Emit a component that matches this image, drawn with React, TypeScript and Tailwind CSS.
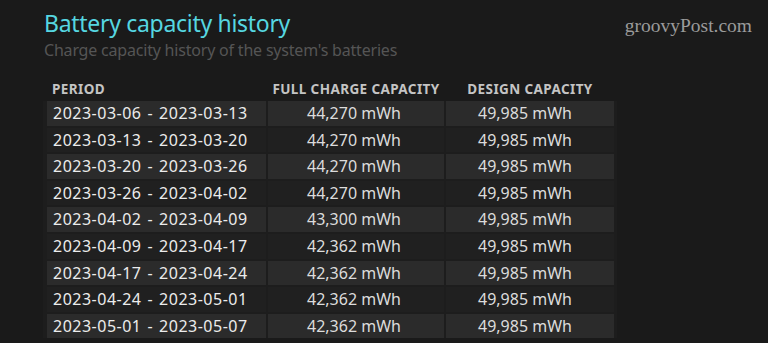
import React from 'react';

interface CapacityRow {
  period: string;
  full: string;
  design: string;
}

const rows: CapacityRow[] = [
  { period: '2023-03-06 - 2023-03-13', full: '44,270 mWh', design: '49,985 mWh' },
  { period: '2023-03-13 - 2023-03-20', full: '44,270 mWh', design: '49,985 mWh' },
  { period: '2023-03-20 - 2023-03-26', full: '44,270 mWh', design: '49,985 mWh' },
  { period: '2023-03-26 - 2023-04-02', full: '44,270 mWh', design: '49,985 mWh' },
  { period: '2023-04-02 - 2023-04-09', full: '43,300 mWh', design: '49,985 mWh' },
  { period: '2023-04-09 - 2023-04-17', full: '42,362 mWh', design: '49,985 mWh' },
  { period: '2023-04-17 - 2023-04-24', full: '42,362 mWh', design: '49,985 mWh' },
  { period: '2023-04-24 - 2023-05-01', full: '42,362 mWh', design: '49,985 mWh' },
  { period: '2023-05-01 - 2023-05-07', full: '42,362 mWh', design: '49,985 mWh' },
];

const App: React.FC = () => {
  return (
    <div className="relative h-[343px] w-[768px] overflow-hidden bg-[#1a1a1a] font-['Noto_Sans',sans-serif]">
      <div className="absolute right-[16px] top-[11px] font-['Liberation_Serif',serif] text-[19.5px] text-[#9b9b9b]">
        groovyPost.com
      </div>

      <div className="pl-[44px] pt-[6px]">
        <h1 className="text-[23px] leading-[34px] tracking-[-0.3px] text-[#56d7e1]">Battery capacity history</h1>
        <p className="text-[16px] leading-[20px] tracking-[-0.2px] text-[#555555]">Charge capacity history of the system's batteries</p>
      </div>

      <div className="ml-[43px] mt-[21px] w-[574px]">
        <div className="grid grid-cols-[219px_176px_168px] gap-x-[2px] px-[4px] pb-[4px] text-[13.5px] font-bold leading-[16px] tracking-[0.4px] text-[#c4c4c4]">
          <div className="pl-[5px]">PERIOD</div>
          <div className="text-center">FULL CHARGE CAPACITY</div>
          <div className="text-center">DESIGN CAPACITY</div>
        </div>
        <div className="grid grid-cols-[219px_176px_168px] gap-x-[2px] gap-y-[2px] bg-[#1d1d1d] px-[4px]">
          {rows.map((r, i) => {
            const bg = i % 2 === 0 ? 'bg-[#2b2b2b]' : 'bg-[#202020]';
            return (
              <React.Fragment key={r.period}>
                <div className={`${bg} h-[24.6px] pl-[6px] text-[16px] leading-[24px] tracking-[0.5px] [word-spacing:1.3px] text-[#ececec]`}>{r.period}</div>
                <div className={`${bg} h-[24.6px] pr-[4px] text-center text-[16px] leading-[24px] text-[#dcdcdc]`}>{r.full}</div>
                <div className={`${bg} h-[24.6px] pr-[10px] text-center text-[16px] leading-[24px] text-[#dcdcdc]`}>{r.design}</div>
              </React.Fragment>
            );
          })}
        </div>
      </div>
    </div>
  );
};

export default App;
